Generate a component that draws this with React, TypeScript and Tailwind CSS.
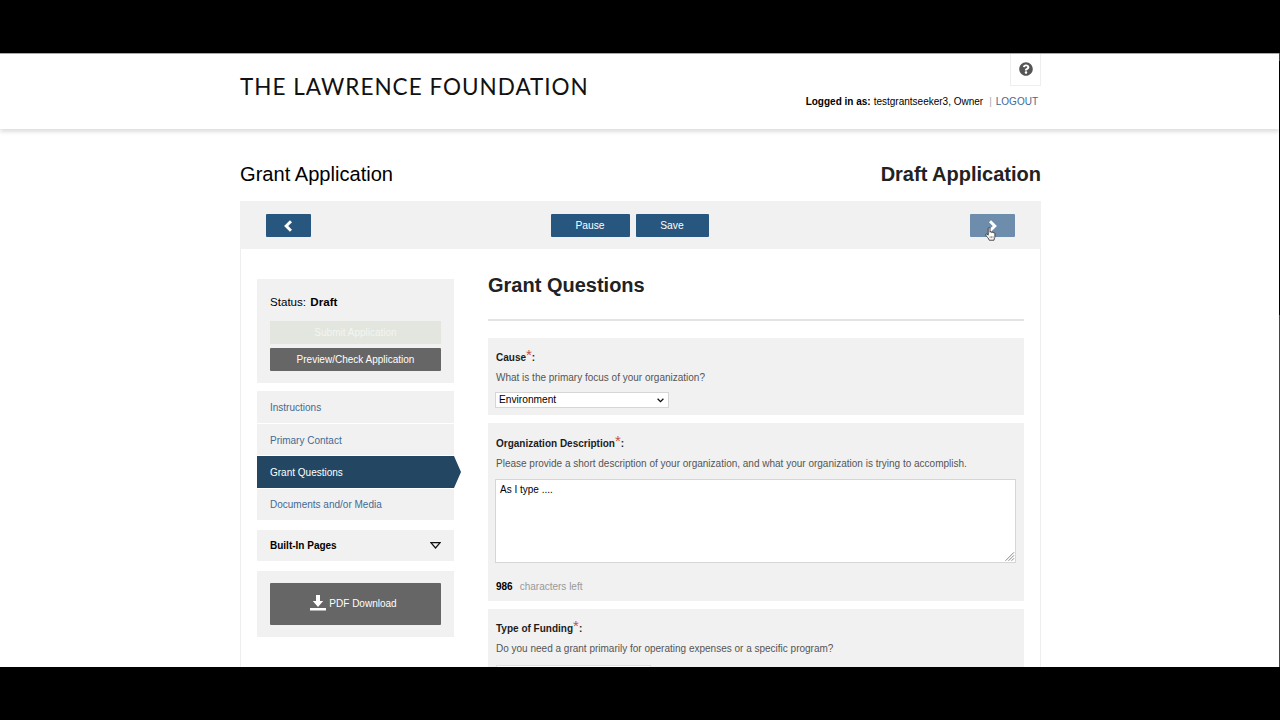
import { ReactNode } from "react";
import { FaQuestionCircle } from "react-icons/fa";

const navItems = [
  { label: "Instructions", active: false, className: "h-8" },
  { label: "Primary Contact", active: false, className: "h-[31px] pt-[1px]" },
  { label: "Grant Questions", active: true, className: "h-8" },
  { label: "Documents and/or Media", active: false, className: "h-[31px]" },
];

const Header = () => {
  return (
    <header className="h-[76px] shrink-0 border-t border-[#a4a8ac] bg-white shadow-[0_3px_4px_rgba(0,0,0,0.13)]">
      <div className="mx-auto flex w-[801px] justify-between">
        <div className="pt-[17px] pl-[1px] font-[Lato] text-[22.5px] leading-[31px] tracking-[1px] whitespace-nowrap text-[#111]">
          THE LAWRENCE FOUNDATION
        </div>
        <div className="-mr-[1px] flex flex-col items-end">
          <div className="flex h-8 w-[31px] items-center justify-center border-x border-b border-[#eee] pb-[1px]">
            <FaQuestionCircle size={14} className="text-[#555]" />
          </div>
          <div className="mt-2 flex pr-[3px] leading-[15px] whitespace-nowrap">
            <span className="font-bold">Logged in as:</span>
            <span className="ml-[3px]">testgrantseeker3, Owner</span>
            <span className="ml-[6px] text-[#aaa]">|</span>
            <span className="ml-[4px] text-[#426892]">LOGOUT</span>
          </div>
        </div>
      </div>
    </header>
  );
};

const HandCursor = () => {
  return (
    <svg
      className="absolute top-[13px] left-[15px]"
      width="11"
      height="14"
      viewBox="0 0 11 14"
      fill="#fff"
      stroke="#333"
      strokeWidth="0.9"
      strokeLinejoin="round"
    >
      <path d="M3.2 8.2V1.6C3.2.3 5 .3 5 1.6v3.6c.3-.7 1.6-.6 1.7.3.4-.6 1.5-.4 1.6.4.5-.5 1.6-.2 1.6.7v3.1c0 1.1-.8 1.7-.9 3.5H4.2C4 11.600 1.800 9.900.9 8.300.4 7.300 1.400 6.600 2.100 7.200z" />
      <path d="M5.100 9.200v2M6.600 9.200v2M8.100 9.200v2" strokeWidth="0.5" />
    </svg>
  );
};

const Toolbar = () => {
  return (
    <div className="flex h-12 items-center justify-between bg-[#f1f1f1] px-[26px] pt-[1px] text-white">
      <button className="flex h-[23px] w-[45px] items-center justify-center rounded-[1px] bg-[#27567f] pr-[1px]">
        <svg width="8" height="12" viewBox="0 0 8 12" fill="none" stroke="#fff" strokeWidth="3">
          <path d="M7 1.200L2.200 6 7 10.800" />
        </svg>
      </button>
      <div className="flex gap-[6px] pr-[22px]">
        <button className="h-[23px] w-[79px] rounded-[1px] bg-[#27567f] pt-[1px] text-[10.300px]">Pause</button>
        <button className="h-[23px] w-[73px] rounded-[1px] bg-[#27567f] pt-[1px] text-[10.300px]">Save</button>
      </div>
      <button className="relative flex h-[23px] w-[45px] items-center justify-center rounded-[1px] bg-[#6e8cab]">
        <svg width="8" height="12" viewBox="0 0 8 12" fill="none" stroke="#fff" strokeWidth="3">
          <path d="M1 1.200L5.800 6 1 10.800" />
        </svg>
        <HandCursor />
      </button>
    </div>
  );
};

const Sidebar = () => {
  return (
    <aside className="flex w-[197px] shrink-0 flex-col pt-[30px]">
      <div className="h-[104px] bg-[#f1f1f1] px-[13px] pt-4">
        <div className="text-[11.600px] leading-[14px] text-black">
          Status: <span className="ml-[1px] font-bold">Draft</span>
        </div>
        <div className="mt-3 flex h-[23px] items-center justify-center bg-[#e2e6df] text-[#f3f5f1]">
          Submit Application
        </div>
        <div className="mt-1 flex h-[23px] items-center justify-center rounded-[1px] bg-[#666] text-white">
          Preview/Check Application
        </div>
      </div>
      <nav className="mt-2 flex flex-col gap-[1px]">
        {navItems.map((item) =>
          item.active ? (
            <div key={item.label} className="-mr-[7px] flex h-8 text-white">
              <div className="flex w-[197px] items-center bg-[#234763] pl-[13px]">{item.label}</div>
              <svg width="7" height="32" viewBox="0 0 7 32" fill="#234763">
                <path d="M0 0l7 16-7 16z" />
              </svg>
            </div>
          ) : (
            <div
              key={item.label}
              className={`flex items-center bg-[#f1f1f1] pl-[13px] text-[#456a92] ${item.className}`}
            >
              {item.label}
            </div>
          )
        )}
      </nav>
      <div className="mt-[10px] flex h-[31px] items-center justify-between bg-[#f1f1f1] pr-[13px] pl-[13px] font-bold text-black">
        Built-In Pages
        <svg width="11" height="7" viewBox="0 0 11 7" fill="none" stroke="#111" strokeWidth="1.2">
          <path d="M0.900 0.700h9.200L5.500 6z" />
        </svg>
      </div>
      <div className="mt-[10px] h-[66px] bg-[#f1f1f1] px-[13px] pt-3">
        <div className="flex h-[42px] items-center justify-center gap-[3px] rounded-[1px] bg-[#666] pr-1 pb-[2px] text-white">
          <svg width="16" height="16" viewBox="0 0 16 16" fill="#fff">
            <path d="M6 0h4v6h3.200L8 12 2.800 6H6zM0 13h16v2.400H0z" />
          </svg>
          PDF Download
        </div>
      </div>
    </aside>
  );
};

type QuestionProps = {
  title: string;
  hint: string;
  className: string;
  children: ReactNode;
};

const Question = ({ title, hint, className, children }: QuestionProps) => {
  return (
    <div className={`bg-[#f1f1f1] px-2 ${className}`}>
      <div className="flex h-[17px] items-end leading-[14px] font-bold text-[#1c1c1c]">
        {title}
        <span className="self-start text-[15px] leading-[14px] font-normal text-[#c0533f]">*</span>
        <span>:</span>
      </div>
      <div className="mt-[6px] leading-[14px] text-[#555]">{hint}</div>
      {children}
    </div>
  );
};

const Questions = () => {
  return (
    <main className="w-[536px] shrink-0 pt-[23px]">
      <h1 className="h-[49px] border-b-2 border-[#e4e4e4] text-[20px] leading-[26px] font-bold text-[#222]">
        Grant Questions
      </h1>
      <div className="mt-[17px] flex flex-col gap-2">
        <Question
          title="Cause"
          hint="What is the primary focus of your organization?"
          className="h-[77px] pt-[10px]"
        >
          <div className="mt-[7px] -ml-[1px] flex h-4 w-[174px] items-center justify-between border border-[#d6d6d6] bg-white pr-1 pl-[3px] text-[10.200px] leading-[12px] text-black">
            <span className="pb-[1px]">Environment</span>
            <svg width="7" height="5" viewBox="0 0 7 5" fill="none" stroke="#111" strokeWidth="1.300">
              <path d="M0.600 0.800l2.900 2.900 2.900-2.900" />
            </svg>
          </div>
        </Question>
        <Question
          title="Organization Description"
          hint="Please provide a short description of your organization, and what your organization is trying to accomplish."
          className="h-[178px] pt-[11px]"
        >
          <div className="mt-2 -ml-[1px] flex h-[84px] w-[521px] items-end justify-between border border-[#d6d6d6] bg-white pb-[1px] text-black">
            <div className="self-start pt-[3px] pl-1 leading-[14px]">As I type ....</div>
            <svg width="10" height="9" viewBox="0 0 10 9" fill="none" stroke="#777" strokeWidth="0.900">
              <path d="M0.500 8.800L9 0.300M3.500 8.800L9 3.300M6.500 8.800L9 6.300" />
            </svg>
          </div>
          <div className="mt-[17px] leading-[14px]">
            <span className="font-bold text-black">986</span>
            <span className="ml-[7px] text-[#999]">characters left</span>
          </div>
        </Question>
        <Question
          title="Type of Funding"
          hint="Do you need a grant primarily for operating expenses or a specific program?"
          className="h-[90px] pt-[10px]"
        >
          <div className="mt-[9px] h-4 w-[155px] border border-[#e0e0e0] bg-white" />
        </Question>
      </div>
    </main>
  );
};

const App = () => {
  return (
    <div className="h-[720px] w-[1280px] overflow-hidden bg-black py-[53px] font-['Liberation_Sans',Arial,sans-serif] text-[10px] text-black">
      <div className="flex h-[614px] overflow-hidden bg-white">
        <div className="w-[1279px] shrink-0">
          <Header />
          <div className="ml-[240px] w-[801px]">
            <div className="flex h-[72px] justify-between pt-8 text-[20px] leading-[26px]">
              <div className="text-[20.100px]">Grant Application</div>
              <div className="font-bold text-[#222]">Draft Application</div>
            </div>
            <Toolbar />
            <div className="flex h-[500px] gap-[34px] border-x border-[#eee] pl-4">
              <Sidebar />
              <Questions />
            </div>
          </div>
        </div>
        {/* window edge with the scroll thumb */}
        <div className="h-full w-[1px] bg-[#444] pt-2">
          <div className="h-[254px] bg-black" />
        </div>
      </div>
    </div>
  );
};

export default App;
